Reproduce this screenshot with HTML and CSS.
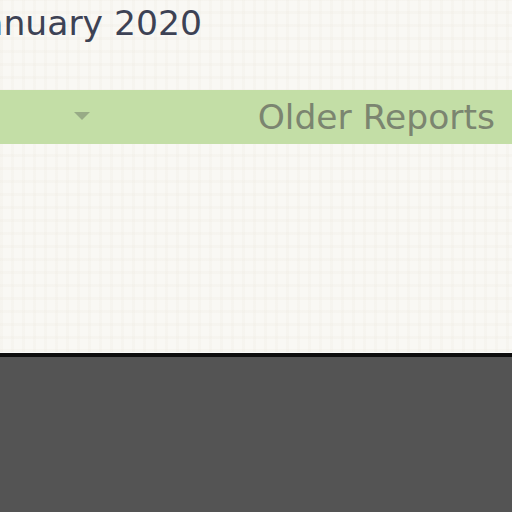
FILE: index.html
```html
<!DOCTYPE html>
<html>
<head>
<meta charset="utf-8">
<link rel="stylesheet" href="styles.css">
</head>
<body>
<div class="page">
  <div class="content">
    <h1 class="title">January 2020</h1>
    <div class="bar">
      <span class="caret"></span>
      <span class="bar-label">Older Reports</span>
    </div>
  </div>
  <div class="footer"></div>
</div>
</body>
</html>
```

FILE: styles.css
```css
html, body {
  margin: 0;
  padding: 0;
  width: 512px;
  height: 512px;
  overflow: hidden;
}
body {
  font-family: "DejaVu Sans", Verdana, sans-serif;
  background: #555555;
}
.page {
  display: flex;
  flex-direction: column;
  height: 512px;
}
.content {
  height: 353px;
  background-color: #f9f8f4;
  background-image:
    repeating-linear-gradient(90deg, rgba(236,232,222,0.22) 0 3px, rgba(255,255,255,0) 3px 11px),
    repeating-linear-gradient(0deg, rgba(236,232,222,0.22) 0 3px, rgba(255,255,255,0) 3px 13px);
  border-bottom: 1px solid #fbfbfa;
  box-sizing: border-box;
}
.title {
  margin: 0 0 47px -28px;
  padding-top: 3px;
  font-size: 34.6px;
  line-height: 40px;
  font-weight: normal;
  color: #3d4254;
  white-space: nowrap;
}
.bar {
  display: flex;
  align-items: center;
  justify-content: space-between;
  height: 54px;
  background: #c3dea6;
  padding: 0 17px 0 74px;
}
.caret {
  width: 0;
  height: 0;
  border-left: 8px solid transparent;
  border-right: 8px solid transparent;
  border-top: 8px solid #98ab86;
  margin-top: -2px;
}
.bar-label {
  font-size: 34.5px;
  line-height: 54px;
  color: #7b8570;
  white-space: nowrap;
}
.footer {
  flex: 1;
  border-top: 4px solid #0d0d0d;
  background: #545454;
}
```
